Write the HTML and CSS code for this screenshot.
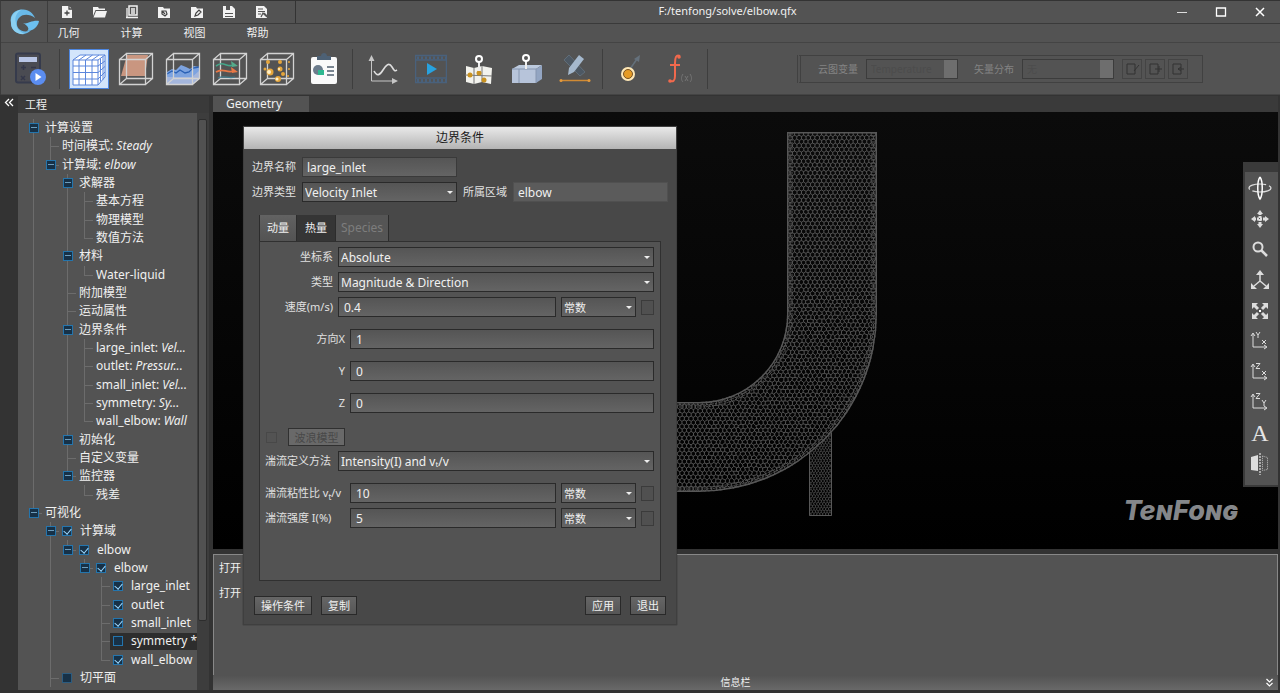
FILE: index.html
```html
<!DOCTYPE html>
<html lang="zh-CN">
<head>
<meta charset="utf-8">
<title>F:/tenfong/solve/elbow.qfx</title>
<link rel="stylesheet" href="styles.css">
</head>
<body>
<svg class="defs" aria-hidden="true">
  <symbol id="frame" viewBox="0 0 36 34"><path d="M8.500 1.500h26v25h-26zM1.500 7.500h26v25h-26zM1.500 7.500l7-6M27.500 7.500l7-6M27.500 32.500l7-6M1.500 32.500l7-6" fill="none" stroke="#d2d2d2" stroke-width="1.300"/></symbol>
</svg>
<header class="head">
  <div class="head-top">
    <div class="logo">
      <svg width="32" height="28" viewBox="0 0 32 28"><path d="M3 15C1 6 8 1 15 1.500C21 2 25 5 27 10C22 6 15 6 12 9C8 12 8 18 11 21C14 24 19 24 23 22C20 26 14 27 10 25C5 23 3 19 3 15Z" fill="#69b9e8"/><path d="M3 15C2 7 8 2 14 1.500C9 4 6 9 8 15C8 20 12 24 17 26C9 27 3 22 3 15Z" fill="#8bd0f2"/><path d="M15 15C19 17 23 12 31 13C30 19 25 23 19 23C22 21 20 18 15 15Z" fill="#6cc0f0"/></svg>
    </div>
    <div class="head-rows">
      <div class="title-row">
        <div class="quick">
          <button aria-label="新建"><svg width="14" height="14" viewBox="0 0 14 14"><path d="M2 1h7l3 3v9H2z" fill="#f2f2f2"/><path d="M9 1v3h3M7 5.500v5M4.500 8h5" stroke="#444" fill="none" stroke-width="1.300"/></svg></button>
          <button aria-label="打开"><svg width="15" height="14" viewBox="0 0 15 14"><path d="M1 2h5l1 1.500h6V5H3.500L1 11z" fill="#f2f2f2"/><path d="M4 6h11l-2 6.500H1.500z" fill="#f2f2f2"/></svg></button>
          <button aria-label="读取"><svg width="14" height="14" viewBox="0 0 14 14"><path d="M4 1h8v9H4z" fill="none" stroke="#f2f2f2" stroke-width="1.500"/><path d="M6 4h4M6 6h4M6 8h4M2 3v9M1 12.500h12" stroke="#f2f2f2" stroke-width="1.300"/></svg></button>
          <button aria-label="几何目录"><svg width="14" height="14" viewBox="0 0 14 14"><path d="M1 2h5l1 1.500h6V13H1z" fill="#f2f2f2"/><path d="M5 6l4 0 1 3-2 2-3-2zM5 6l3 3" fill="none" stroke="#444" stroke-width="1.200"/></svg></button>
          <button aria-label="编辑目录"><svg width="14" height="14" viewBox="0 0 14 14"><path d="M1 2h5l1 1.500h6V13H1z" fill="#f2f2f2"/><path d="M5 11l1-3 3-3 2 2-3 3z" fill="none" stroke="#444" stroke-width="1.200"/></svg></button>
          <button aria-label="保存"><svg width="14" height="14" viewBox="0 0 14 14"><path d="M1 1h9l3 3v9H1z" fill="#f2f2f2"/><path d="M4 1h4v4H4zM3 8h8v1H3zM3 11h8v1H3z" fill="#555"/></svg></button>
          <button aria-label="另存"><svg width="14" height="14" viewBox="0 0 14 14"><path d="M1 1h8l3 3v9H1z" fill="#f2f2f2"/><path d="M3 4h5M3 6.500h7M3 9h3" stroke="#555"/><path d="M6 12l2-4 2 2 2 2M9 8l4 4" stroke="#555" fill="none" stroke-width="1.300"/></svg></button>
        </div>
        <h1 class="doc-title">F:/tenfong/solve/elbow.qfx</h1>
        <div class="window-buttons">
          <button aria-label="最小化"><svg width="12" height="12"><path d="M1 6.500h10" stroke="#ddd"/></svg></button>
          <button aria-label="最大化"><svg width="12" height="12"><path d="M1.500 2h9v8h-9z" fill="none" stroke="#fff" stroke-width="1.300"/></svg></button>
          <button aria-label="关闭"><svg width="12" height="12"><path d="M2 2l8 8M10 2l-8 8" stroke="#fff" stroke-width="1.500"/></svg></button>
        </div>
      </div>
      <nav class="menu"><button>几何</button><button>计算</button><button>视图</button><button>帮助</button></nav>
    </div>
  </div>
  <div class="toolbar">
    <div class="tools run"><button aria-label="开始计算"><svg width="34" height="34" viewBox="0 0 34 34"><rect x="2" y="1.500" width="24" height="29" rx="2" fill="#4a4b52" stroke="#363b4c" stroke-width="2"/><rect x="5" y="5" width="18" height="5" fill="#b9c6e6"/><path d="M7 15.500h5M9.500 13v5M17 15.500h5M7 24l4 4M11 24l-4 4" stroke="#34374a" stroke-width="1.500"/><circle cx="24" cy="25" r="8" fill="#5b8df0"/><path d="M21.500 21l6 4-6 4z" fill="#fff"/></svg></button></div>
    <div class="tools">
      <button class="on" aria-label="网格"><svg width="36" height="36" viewBox="0 0 36 36"><path d="M2 9L9 4h25v22l-7 8H2z" fill="#fff"/><path d="M2 9h25v25H2zM8 9v25M14.500 9v25M21 9v25M2 15h25M2 21.500h25M2 28h25M2 9l7-5h25l-7 5M8 9l7-5M14.500 9l7-5M21 9l7-5M34 4v22l-7 8M29.500 7.500v23M32 5.500v23M27 15l7-5M27 21.500l7-6M27 28l7-7" fill="none" stroke="#5b86dc"/></svg></button>
      <button aria-label="切面"><svg width="36" height="34"><path d="M9 3h21l-3 21H3z" fill="#c99680"/><use href="#frame"/></svg></button>
      <button aria-label="等值面"><svg width="36" height="34"><path d="M2 20l5-3 4 1 5-5 5 2 4 2 4-3 5 1v11l-7 6H2z" fill="#7da3df"/><path d="M2 25h25l7-6v8l-7 6H2z" fill="#a4b6dc"/><path d="M2 22l5-3 4 2 4-3 5 3 4-1 4-4 6-1" fill="none" stroke="#2960b4" stroke-width="1.300"/><use href="#frame"/></svg></button>
      <button aria-label="流线"><svg width="36" height="34"><use href="#frame"/><path d="M4 14c8-6 10 2 18-1" fill="none" stroke="#45a78a" stroke-width="1.600"/><path d="M4 20c8-5 10 2 18-1" fill="none" stroke="#e87846" stroke-width="1.800"/><path d="M19 9l7 5-6 1z" fill="#55ab8a"/><path d="M19 15l7 5-6 1z" fill="#e87846"/><path d="M6 26c7-3 10 1 17-1" stroke="#437b8c" fill="none" stroke-width="1.300"/></svg></button>
      <button aria-label="粒子"><svg width="36" height="34"><use href="#frame"/><g fill="#e6a63c"><circle cx="9" cy="10" r="2"/><circle cx="21" cy="10" r="2"/><circle cx="6" cy="17" r="1.500"/><circle cx="11" cy="20" r="3.500"/><circle cx="21" cy="17" r="2.500"/><circle cx="19" cy="27" r="3"/><circle cx="24" cy="22" r="2"/><circle cx="30" cy="10" r="1"/><circle cx="30" cy="17" r="1"/><circle cx="29" cy="24" r="1"/></g><g fill="#fff0c8"><circle cx="10" cy="20" r="2"/><circle cx="20" cy="17" r="1"/><circle cx="18" cy="27" r="1.500"/></g></svg></button>
      <button aria-label="报告"><svg width="32" height="34" viewBox="0 0 32 34"><rect x="3" y="5" width="26" height="27" rx="2" fill="#fafafa"/><path d="M9 4h4c0-4 6-4 6 0h4v4H9z" fill="#4d6175"/><circle cx="10" cy="18" r="5" fill="#6c7c8c"/><path d="M10 18h6v5h-6z" fill="#2fb890"/><path d="M19 15h7M19 19h7M19 23h7" stroke="#506070" stroke-width="1.500"/></svg></button>
    </div>
    <div class="tools plots">
      <button aria-label="曲线"><svg width="32" height="32" viewBox="0 0 32 32"><path d="M4.500 6v22H27" fill="none" stroke="#c6c6c6"/><path d="M1.500 8l3-6 3 6zM25 25l6 3-6 3z" fill="#c6c6c6"/><path d="M7 18c3 6 6 4 9-1s6-8 9-3 3 4 5 3" fill="none" stroke="#ddd" stroke-width="1.600"/></svg></button>
      <button aria-label="动画"><svg width="32" height="30" viewBox="0 0 32 30"><path d="M.5 1.500h31v27H.500zM.5 6h31M.5 24h31" fill="none" stroke="#49617c" stroke-width="1.500"/><path d="M2 4h29M2 26.500h29" stroke="#49617c" stroke-width="3" stroke-dasharray="2 2"/><path d="M12 9l10 6-10 6z" fill="#28a2df"/></svg></button>
      <button aria-label="位置"><svg width="30" height="32" viewBox="0 0 30 32"><path d="M2 13l8 2 8-2 10 2-1 16-9-2-8 2-8-2z" fill="#f2f2ed"/><path d="M10 15v16M18 13v16M1 22l27 1" stroke="#777"/><g fill="#c99220"><circle cx="6" cy="22" r="2.500"/><circle cx="15" cy="20" r="2.500"/><circle cx="20" cy="27" r="2.500"/></g><path d="M15 18V9" stroke="#eee" stroke-width="2"/><circle cx="15" cy="6" r="3" fill="#555" stroke="#fff" stroke-width="2"/></svg></button>
      <button aria-label="区域"><svg width="32" height="32" viewBox="0 0 32 32"><path d="M1 16l7-4h23l-6 4z" fill="#bccade"/><path d="M1 16h24v14H1z" fill="#b7c4da"/><path d="M25 16l6-4v14l-6 4z" fill="#93a5c2"/><path d="M1 16h24v14M8 16v14" stroke="#8696b0" fill="none"/><path d="M15 16V8" stroke="#eee" stroke-width="2"/><circle cx="15" cy="5" r="3" fill="#555" stroke="#fff" stroke-width="2"/></svg></button>
      <button aria-label="测量"><svg width="32" height="32" viewBox="0 0 32 32"><path d="M5 7l5-5 16 17-5 4z" fill="#4d5863" stroke="#606d78"/><path d="M20 2l5 4L15 19l-6 3 1-7z" fill="#a5b9ce"/><path d="M2 27.500h29" stroke="#d18b34" stroke-width="1.500"/><circle cx="2" cy="27.500" r="1.500" fill="#e49a3c"/><circle cx="30" cy="27.500" r="1.500" fill="#e49a3c"/></svg></button>
    </div>
    <div class="tools extra">
      <button aria-label="探针"><svg width="28" height="32" viewBox="0 0 28 32"><path d="M14 16l7-10" stroke="#65717c" stroke-width="1.500"/><path d="M18 6l6-4-1 7z" fill="#65717c"/><circle cx="12" cy="21" r="7" fill="#ffe8b6"/><circle cx="12" cy="21" r="4.500" fill="#e69b24" stroke="#765224"/></svg></button>
      <button aria-label="函数"><svg width="28" height="32" viewBox="0 0 28 32"><path d="M15 3c-4-2-5 2-5 7v13c0 5-2 6-5 5M5 12h10" fill="none" stroke="#f1694d" stroke-width="2"/><circle cx="14" cy="4" r="1.800" fill="#f1694d"/><circle cx="5" cy="28" r="1.800" fill="#f1694d"/><path d="M18 21c-2 3-2 6 0 8M25 21c2 3 2 6 0 8M20 23l3 5M23 23l-3 5" fill="none" stroke="#747474"/></svg></button>
    </div>
    <div class="variables">
      <label for="cloud">云图变量</label>
      <select id="cloud" disabled><option>Temperature</option></select>
      <label for="vector">矢量分布</label>
      <select id="vector" disabled><option>无</option></select>
      <button disabled aria-label="编辑"><svg width="16" height="14"><path d="M3 2h8v10H3zM10 9l5-6" fill="none" stroke="#333"/></svg></button>
      <button disabled aria-label="导入"><svg width="16" height="14"><path d="M3 2h8v10H3zM8 7h7M12 4v6" fill="none" stroke="#333"/></svg></button>
      <button disabled aria-label="导出"><svg width="16" height="14"><path d="M3 2h8v10H3zM8 7h6M8 7l3-2M8 7l3 2" fill="none" stroke="#333"/></svg></button>
    </div>
  </div>
</header>
<main class="work">
  <div class="rail"><button aria-label="收起"><svg width="10" height="9"><path d="M5 1L1.500 4.500 5 8M9 1L5.500 4.500 9 8" fill="none" stroke="#fff" stroke-width="1.300"/></svg></button></div>
  <aside class="side">
    <h2>工程</h2>
    <div class="tree-wrap">
    <ul class="tree">
      <li><i class="v"><button class="tg" aria-label="折叠"></button></i><span>计算设置</span></li>
      <li><i class="v"></i><i class="t"></i><span>时间模式: <em>Steady</em></span></li>
      <li><i class="v"></i><i class="l"><button class="tg" aria-label="折叠"></button></i><span>计算域: <em>elbow</em></span></li>
      <li><i class="v"></i><i></i><i class="v"><button class="tg" aria-label="折叠"></button></i><span>求解器</span></li>
      <li><i class="v"></i><i></i><i class="v"></i><i class="t"></i><span>基本方程</span></li>
      <li><i class="v"></i><i></i><i class="v"></i><i class="t"></i><span>物理模型</span></li>
      <li><i class="v"></i><i></i><i class="v"></i><i class="l"></i><span>数值方法</span></li>
      <li><i class="v"></i><i></i><i class="v"><button class="tg" aria-label="折叠"></button></i><span>材料</span></li>
      <li><i class="v"></i><i></i><i class="v"></i><i class="l"></i><span>Water-liquid</span></li>
      <li><i class="v"></i><i></i><i class="t"></i><span>附加模型</span></li>
      <li><i class="v"></i><i></i><i class="t"></i><span>运动属性</span></li>
      <li><i class="v"></i><i></i><i class="v"><button class="tg" aria-label="折叠"></button></i><span>边界条件</span></li>
      <li><i class="v"></i><i></i><i class="v"></i><i class="t"></i><span>large_inlet: <em>Vel...</em></span></li>
      <li><i class="v"></i><i></i><i class="v"></i><i class="t"></i><span>outlet: <em>Pressur...</em></span></li>
      <li><i class="v"></i><i></i><i class="v"></i><i class="t"></i><span>small_inlet: <em>Vel...</em></span></li>
      <li><i class="v"></i><i></i><i class="v"></i><i class="t"></i><span>symmetry: <em>Sy...</em></span></li>
      <li><i class="v"></i><i></i><i class="v"></i><i class="l"></i><span>wall_elbow: <em>Wall</em></span></li>
      <li><i class="v"></i><i></i><i class="v"><button class="tg" aria-label="折叠"></button></i><span>初始化</span></li>
      <li><i class="v"></i><i></i><i class="t"></i><span>自定义变量</span></li>
      <li><i class="v"></i><i></i><i class="l"><button class="tg" aria-label="折叠"></button></i><span>监控器</span></li>
      <li><i class="v"></i><i></i><i></i><i class="l"></i><span>残差</span></li>
      <li><i class="l"><button class="tg" aria-label="折叠"></button></i><span>可视化</span></li>
      <li><i></i><i class="t"><button class="tg" aria-label="折叠"></button></i><label><input type="checkbox" checked>计算域</label></li>
      <li><i></i><i class="v"></i><i class="l"><button class="tg" aria-label="折叠"></button></i><label><input type="checkbox" checked>elbow</label></li>
      <li><i></i><i class="v"></i><i></i><i class="l"><button class="tg" aria-label="折叠"></button></i><label><input type="checkbox" checked>elbow</label></li>
      <li><i></i><i class="v"></i><i></i><i></i><i class="t"></i><label><input type="checkbox" checked>large_inlet</label></li>
      <li><i></i><i class="v"></i><i></i><i></i><i class="t"></i><label><input type="checkbox" checked>outlet</label></li>
      <li><i></i><i class="v"></i><i></i><i></i><i class="t"></i><label><input type="checkbox" checked>small_inlet</label></li>
      <li><i></i><i class="v"></i><i></i><i></i><i class="t"></i><label class="picked"><input type="checkbox">symmetry *</label></li>
      <li><i></i><i class="v"></i><i></i><i></i><i class="l"></i><label><input type="checkbox" checked>wall_elbow</label></li>
      <li><i></i><i class="t"></i><label><input type="checkbox" class="off">切平面</label></li>
    </ul>
    <div class="scroll"><div class="thumb"></div></div>
    </div>
  </aside>
  <section class="stage">
    <div class="stage-tabs"><button>Geometry</button></div>
    <div class="view">
      <svg class="mesh" width="266" height="400" viewBox="613 124 266 400" overflow="visible">
        <clipPath id="pipe"><path d="M613 402H699A88 88 0 0 0 787 314V132H877V314A178 178 0 0 1 699 492H613Z"/></clipPath>
        <clipPath id="branch"><path d="M809 455L832 432V516H809Z"/></clipPath>
        <path id="cells" clip-path="url(#pipe)"/>
        <path id="fine" clip-path="url(#branch)"/>
        <g clip-path="url(#pipe)" class="layers"><path d="M613 402H699A88 88 0 0 0 787 314V132H877V314A178 178 0 0 1 699 492H613" stroke-width="3"/><path d="M613 405H699A91 91 0 0 0 790 314V132M874 132V314A175 175 0 0 1 699 489H613M613 407H699A93 93 0 0 0 792 314V132M872 132V314A173 173 0 0 1 699 487H613" stroke-dasharray="2 1"/></g>
        <path class="layers" d="M809.500 452V515.500H831.500V433"/>
      </svg>
      <div class="brand">TenFong</div>
      <div class="view-tools">
        <button aria-label="旋转"><svg width="26" height="26" viewBox="0 0 26 26"><ellipse cx="13" cy="13" rx="11" ry="4" fill="none" stroke="#ddd" stroke-width="1.200" stroke-dasharray="20 3"/><path d="M13 2c-3 4-3 18 0 22c3-4 3-18 0-22" fill="none" stroke="#fff" stroke-width="1.500"/></svg></button>
        <button aria-label="平移"><svg width="18" height="18" viewBox="0 0 18 18"><path d="M9 0l3 4H6zM9 18l3-4H6zM0 9l4-3v6zM18 9l-4-3v6z" fill="#ddd"/><path d="M9 3v12M3 9h12" stroke="#ddd" stroke-width="3" stroke-dasharray="2 1"/></svg></button>
        <button aria-label="缩放"><svg width="18" height="18" viewBox="0 0 18 18"><circle cx="7" cy="7" r="4.500" fill="none" stroke="#ddd" stroke-width="2"/><path d="M10.500 10.500L16 16" stroke="#ddd" stroke-width="2.500"/></svg></button>
        <button aria-label="等轴测"><svg width="18" height="20" viewBox="0 0 18 20"><path d="M9 3v8L3 16M9 11l6 5" fill="none" stroke="#ddd" stroke-width="1.500"/><path d="M9 0l4 5H5zM0 19v-6l6 6zM18 19v-6l-6 6z" fill="#ddd"/></svg></button>
        <button aria-label="适应窗口"><svg width="18" height="18" viewBox="0 0 18 18"><path d="M1 1h6L1 7zM17 1h-6l6 6zM1 17h6l-6-6zM17 17h-6l6-6z" fill="#ddd"/><path d="M3 3l4 4M15 3l-4 4M3 15l4-4M15 15l-4-4" stroke="#ddd" stroke-width="3"/><rect x="8" y="8" width="2" height="2" fill="#fff"/></svg></button>
        <button aria-label="YX 视图"><svg width="20" height="20" viewBox="0 0 20 20"><path d="M3 3v13h13M1 5l2-3 2 3M14 14l3 2-3 2M12 9l4 4M16 9l-4 4M6 1l2 3 2-3M8 4v3" fill="none" stroke="#ddd"/></svg></button>
        <button aria-label="ZX 视图"><svg width="20" height="20" viewBox="0 0 20 20"><path d="M3 3v13h13M1 5l2-3 2 3M14 14l3 2-3 2M12 9l4 4M16 9l-4 4M6 1.500h4l-4 5h4" fill="none" stroke="#ddd"/></svg></button>
        <button aria-label="ZY 视图"><svg width="20" height="20" viewBox="0 0 20 20"><path d="M3 3v13h13M1 5l2-3 2 3M14 14l3 2-3 2M12 8l2 3 2-3M14 11v3M6 1.500h4l-4 5h4" fill="none" stroke="#ddd"/></svg></button>
        <button class="serif">A</button>
        <button aria-label="镜像"><svg width="20" height="22" viewBox="0 0 20 22"><path d="M1 4l7-2v16l-7-1z" fill="#ddd"/><path d="M10 0v22" stroke="#fff" stroke-dasharray="2 1"/><path d="M12.500 3l5 1.500v12l-5 1z" fill="none" stroke="#bbb" stroke-dasharray="1 1"/></svg></button>
      </div>
    </div>
    <div class="console"><p>打开 文件</p><p>打开 elbow</p></div>
    <footer class="status"><span>信息栏</span><button aria-label="收起信息栏"><svg width="9" height="10"><path d="M1.500 1L4.500 4l3-3M1.500 5L4.500 8l3-3" fill="none" stroke="#fff" stroke-width="1.200"/></svg></button></footer>
  </section>
</main>
<form class="dialog" role="dialog" aria-labelledby="dlg">
  <h2 id="dlg">边界条件</h2>
  <div class="general">
    <label for="name">边界名称</label><input id="name" value="large_inlet">
    <label for="kind">边界类型</label><span class="pick"><select id="kind"><option>Velocity Inlet</option></select></span>
    <label for="zone">所属区域</label><input id="zone" class="flat" value="elbow" readonly>
  </div>
  <div class="tabs"><button type="button" class="cur">动量</button><button type="button" class="dark">热量</button><button type="button" disabled>Species</button></div>
  <div class="panel">
    <div class="row"><label for="cs">坐标系</label><span class="pick grow"><select id="cs"><option>Absolute</option></select></span></div>
    <div class="row"><label for="ty">类型</label><span class="pick grow"><select id="ty"><option>Magnitude &amp; Direction</option></select></span></div>
    <div class="row"><label for="sp">速度(m/s)</label><input id="sp" class="grow" value="0.4"><span class="pick unit"><select aria-label="速度方式"><option>常数</option></select></span><button type="button" class="dots" aria-label="速度设置"></button></div>
    <div class="row wide far"><label for="dx">方向X</label><input id="dx" class="grow" value="1"></div>
    <div class="row wide far"><label for="dy">Y</label><input id="dy" class="grow" value="0"></div>
    <div class="row wide far"><label for="dz">Z</label><input id="dz" class="grow" value="0"></div>
    <div class="wave"><input type="checkbox" disabled aria-label="启用波浪模型"><button type="button" disabled>波浪模型</button></div>
    <div class="row start"><label for="tm">湍流定义方法</label><span class="pick grow"><select id="tm"><option>Intensity(I) and vₜ/v</option></select></span></div>
    <div class="row wide start far"><label for="tv">湍流粘性比 v<sub>t</sub>/v</label><input id="tv" class="grow" value="10"><span class="pick unit"><select aria-label="粘性比方式"><option>常数</option></select></span><button type="button" class="dots" aria-label="粘性比设置"></button></div>
    <div class="row wide start"><label for="ti">湍流强度 I(%)</label><input id="ti" class="grow" value="5"><span class="pick unit"><select aria-label="强度方式"><option>常数</option></select></span><button type="button" class="dots" aria-label="强度设置"></button></div>
  </div>
  <div class="actions"><button type="button">操作条件</button><button type="button">复制</button><span></span><button type="button">应用</button><button type="button">退出</button></div>
</form>
<script src="mesh.js"></script>
</body>
</html>
```

FILE: styles.css
```css
* { box-sizing: border-box; }
body { margin: 0; height: 100vh; display: flex; flex-direction: column; background: #333; color: #f0f0f0; font: 12px/16px "Noto Sans", "Noto Sans CJK SC", sans-serif; overflow: hidden; position: relative; }
button, input, select { font: inherit; color: inherit; margin: 0; padding: 0; border: 0; background: none; border-radius: 0; min-width: 0; }
h1, h2, p, ul { margin: 0; padding: 0; font-weight: normal; font-size: inherit; }
svg { display: block; }
.defs { position: absolute; width: 0; height: 0; }

.head { background: #535353; border-top: 1px solid #333; border-left: 1px solid #3c3c3c; }
.head-top { display: flex; height: 42px; border-bottom: 1px solid #444; }
.logo { width: 47px; display: grid; place-items: center; border-right: 1px solid #3d3d3d; }
.head-rows { flex: 1; }
.title-row { display: grid; grid-template-columns: 248px 1fr 118px; height: 23px; border-bottom: 1px solid #3a3a3a; }
.quick { display: flex; justify-content: space-between; padding: 0 26px 0 11px; align-items: center; border-right: 1px solid #333; }
.quick button { width: 15px; height: 20px; display: grid; place-items: center; }
.doc-title { font-size: 11px; line-height: 20px; text-align: center; padding-right: 3px; }
.window-buttons { display: flex; justify-content: space-around; align-items: center; }
.menu { display: flex; gap: 40px; padding-left: 9px; font-size: 11px; line-height: 17px; }
.menu button { width: 23px; }
.toolbar { display: flex; height: 52px; align-items: center; border-bottom: 1px solid #444; }
.tools { display: flex; gap: 7px; height: 40px; align-items: center; border-right: 1px solid #3e3e3e; padding: 0 8px 0 9px; }
.tools button { width: 40px; height: 40px; display: grid; place-items: center; }
.tools.run { padding-left: 10px; }
.tools .on { background: #d3e5fb; border: 1px solid #4d86e0; }
.tools.plots { gap: 8px; padding: 0 7px 0 10px; }
.tools.extra { gap: 9px; padding-left: 7px; }
.variables { display: flex; align-items: center; margin: 0 77px 0 auto; width: 406px; height: 28px; border: 1px solid #414141; border-left: 4px double #414141; padding-left: 17px; font-size: 10px; color: #838383; }
.variables select { appearance: none; width: 92px; height: 20px; margin: 0 16px 0 8px; border: 1px solid #3c3c3c; background: linear-gradient(90deg, transparent 77px, #6e6e6e 77px); color: #4c4c4c; padding-left: 4px; opacity: 1; }
.variables select + button { margin-left: -8px; }
.variables button { width: 20px; height: 20px; margin-right: 3px; border: 1px solid #444; display: grid; place-items: center; }

.work { flex: 1; display: flex; min-height: 0; padding: 1px 2px 3px 0; }
.rail { width: 18px; padding: 2px 4px; }
.rail svg { margin-bottom: 4px; }
.side { width: 191px; display: flex; flex-direction: column; margin-right: 4px; }
.side h2 { height: 17px; line-height: 17px; padding-left: 7px; font-size: 11px; background: #3a3a3a; }
.tree-wrap { flex: 1; display: flex; background: #535353; min-height: 0; }
.tree { flex: 1; list-style: none; display: grid; grid-auto-rows: 1fr; padding: 6px 0 3px 7px; min-width: 0; }
.tree li { display: flex; align-items: center; white-space: nowrap; min-height: 0; overflow: hidden; }
.tree span { padding-left: 3px; }
.tree i { width: 17px; flex: none; align-self: stretch; position: relative; display: grid; place-items: center; }
.tree .v::before, .tree .t::before, .tree .l::before { content: ""; position: absolute; left: 8px; top: 0; bottom: 0; border-left: 1px solid #6c6c6c; }
.tree .l::before { bottom: 50%; }
.tree .t::after, .tree .l::after { content: ""; position: absolute; left: 8px; right: 0; top: 50%; border-top: 1px solid #6c6c6c; }
.tg, .tree input { appearance: none; width: 10px; height: 10px; border: 1px solid #2475ad; background: #173147; position: relative; z-index: 1; }
.tg::after { content: ""; position: absolute; left: 1px; right: 1px; top: 3px; border-top: 1px solid #6d9dbd; }
.tree label { display: flex; align-items: center; gap: 8px; padding-left: 3px; flex: 1; height: 17px; min-width: 0; }
.tree input { flex: none; margin: 0; }
.tree input:checked::after { content: ""; position: absolute; left: 2px; top: 0; width: 4px; height: 6px; border: solid #9dd8ff; border-width: 0 1px 1px 0; transform: rotate(40deg); }
.tree .picked { background: #2d2d2d; }
.tree input.off { border-color: #2c5c80; }
.scroll { width: 12px; background: #3d3d3d; padding: 6px 2px 0 1px; }
.thumb { height: 88%; border: 1px solid #2d2d2d; background: #515151; border-radius: 2px; }

.stage { flex: 1; display: flex; flex-direction: column; min-width: 0; }
.stage-tabs { background: #3a3a3a; height: 16px; }
.stage-tabs button { height: 16px; width: 96px; background: #535353; line-height: 16px; text-align: left; padding-left: 13px; }
.view { flex: 1; display: flex; justify-content: center; align-items: flex-start; padding-top: 12px; background: linear-gradient(#0b0b0b, #000); position: relative; min-height: 0; }
#cells, #fine, .layers { fill: none; stroke: #666; }
#cells { stroke-width: .8; }
#fine { stroke-width: .6; }
.layers { stroke: #575757; }
.brand { position: absolute; right: 40px; bottom: 24px; font: italic 800 27px/28px Inter, sans-serif; font-variant: small-caps; color: #85878a; }
.view-tools { position: absolute; right: 0; top: 50px; width: 35px; height: 325px; background: #535353; border: solid #3a3a3a; border-width: 10px 0 2px 2px; display: grid; grid-auto-rows: 1fr; padding: 1px 3px 6px 0; }
.view-tools button { display: grid; place-items: center; min-height: 0; }
.view-tools .serif { font: 24px/30px "Liberation Serif", serif; color: #e4e4e4; }
.console { height: 121px; margin-top: 5px; background: #535353; border: solid #888; border-width: 1px 1px 0; padding: 0 5px; font-size: 11px; line-height: 25px; }
.status { height: 15px; display: grid; grid-template-columns: 1fr auto 1fr; background: linear-gradient(#525252, #696969); font-size: 10px; line-height: 15px; }
.status span { grid-column: 2; padding-right: 20px; }
.status button { justify-self: end; padding: 2px 4px; }

.dialog { position: absolute; left: 243px; top: 126px; width: 434px; background: #484848; border: 1px solid #3f3f3f; box-shadow: 0 0 1px #222; padding-bottom: 9px; font-size: 12px; }
.dialog h2 { height: 22px; line-height: 22px; text-align: center; font-size: 12px; color: #1c1c1c; background: linear-gradient(#e9e9e9, #b4b4b4); }
.dialog label { font-size: 11px; color: #e0e0e0; white-space: nowrap; }
.dialog input:not([type]), .dialog select { height: 20px; border: 1px solid #2a2a2a; background: linear-gradient(#555, #646464); padding: 0 5px; width: 100%; appearance: none; outline: 0; line-height: 17px; }
.dialog select { padding: 0 2px; }
.general { display: grid; grid-template-columns: 44px 155px 44px 155px; column-gap: 6px; row-gap: 5px; padding: 8px 8px 13px; align-items: center; }
.general > :nth-child(3) { grid-column: 1; }
.dialog .general input { padding: 0 4px; border-color: #3a3a3a; }
.dialog .general input.flat { border-color: #505050; background: #5b5b5b; }
.pick { position: relative; display: block; }
.pick::after { content: ""; position: absolute; right: 4px; top: 9px; border: solid transparent; border-width: 3px 3px 0; border-top-color: #eee; pointer-events: none; }
.tabs { display: flex; padding-left: 15px; }
.tabs button { height: 26px; padding: 0 8px; border: solid #2c2c2c; border-width: 0 1px 0 0; background: #555; font-size: 11px; }
.tabs .cur { border-left-width: 1px; padding: 0 7px; background: linear-gradient(#626262, #535353); }
.tabs .dark { background: #353535; }
.tabs button:disabled { color: #7d7d7d; font-size: 12px; padding: 0 5px; }
.panel { margin: 0 15px; height: 340px; background: #535353; border: 1px solid #303030; padding: 5px 6px 0 5px; display: flex; flex-direction: column; gap: 5px; }
.row { display: flex; gap: 5px; height: 20px; align-items: center; }
.row label { width: 68px; text-align: right; flex: none; }
.row.wide label { width: 80px; }
.row.start label { text-align: left; }
.row.far { margin-top: 7px; }
.row sub { font-size: 8px; line-height: 0; }
.row .grow { flex: 1; }
.row .unit { width: 75px; font-size: 11px; }
.dots { width: 13px; height: 15px; border: 1px solid #3b3b3b; background: #505050; }
.wave { display: flex; gap: 11px; height: 18px; align-items: center; margin-top: 10px; }
.wave input { appearance: none; width: 11px; height: 11px; border: 1px solid #484848; margin-left: 1px; }
.wave button { width: 57px; height: 18px; border: 1px solid #303030; background: #696969; font-size: 11px; line-height: 15px; color: #484848; }
.actions { display: flex; gap: 9px; padding: 15px 10px 0; font-size: 11px; }
.actions span { flex: 1; }
.actions button { height: 19px; border: 1px solid #292929; background: linear-gradient(#666, #565656); padding: 0 6px; line-height: 17px; }
```

FILE: mesh.js
```js
// Deterministic vertex offset so neighbouring cells share their corners.
function wobble(x, y, amount) {
  const a = Math.sin(Math.round(x * 3) * 12.9 + Math.round(y * 3) * 78.2) * 43758.5;
  const b = Math.sin(Math.round(x * 3) * 39.3 + Math.round(y * 3) * 11.1) * 24634.6;
  return [x + (a - Math.floor(a) - 0.5) * amount, y + (b - Math.floor(b) - 0.5) * amount];
}

// Three edges for each hexagon cover the whole honeycomb.
function honeycomb(x0, y0, x1, y1, r, amountAt) {
  const w = r * Math.sqrt(3);
  let d = "";
  let odd = false;
  for (let y = y0; y < y1; y += r * 1.5, odd = !odd) {
    for (let x = x0 + (odd ? w / 2 : 0); x < x1; x += w) {
      const pts = [[-w / 2, r / 2], [-w / 2, -r / 2], [0, -r], [w / 2, -r / 2]];
      d += pts.map(([px, py], i) => {
        const p = wobble(x + px, y + py, amountAt(x, y));
        return (i ? "L" : "M") + p[0].toFixed(1) + " " + p[1].toFixed(1);
      }).join("");
    }
  }
  return d;
}

document.getElementById("cells").setAttribute("d",
  honeycomb(610, 130, 880, 495, 2.6, (x, y) => (y > 290 && x > 705 ? 1.3 : 0.4)));
document.getElementById("fine").setAttribute("d",
  honeycomb(808, 430, 834, 518, 1.7, () => 0.4));
```
